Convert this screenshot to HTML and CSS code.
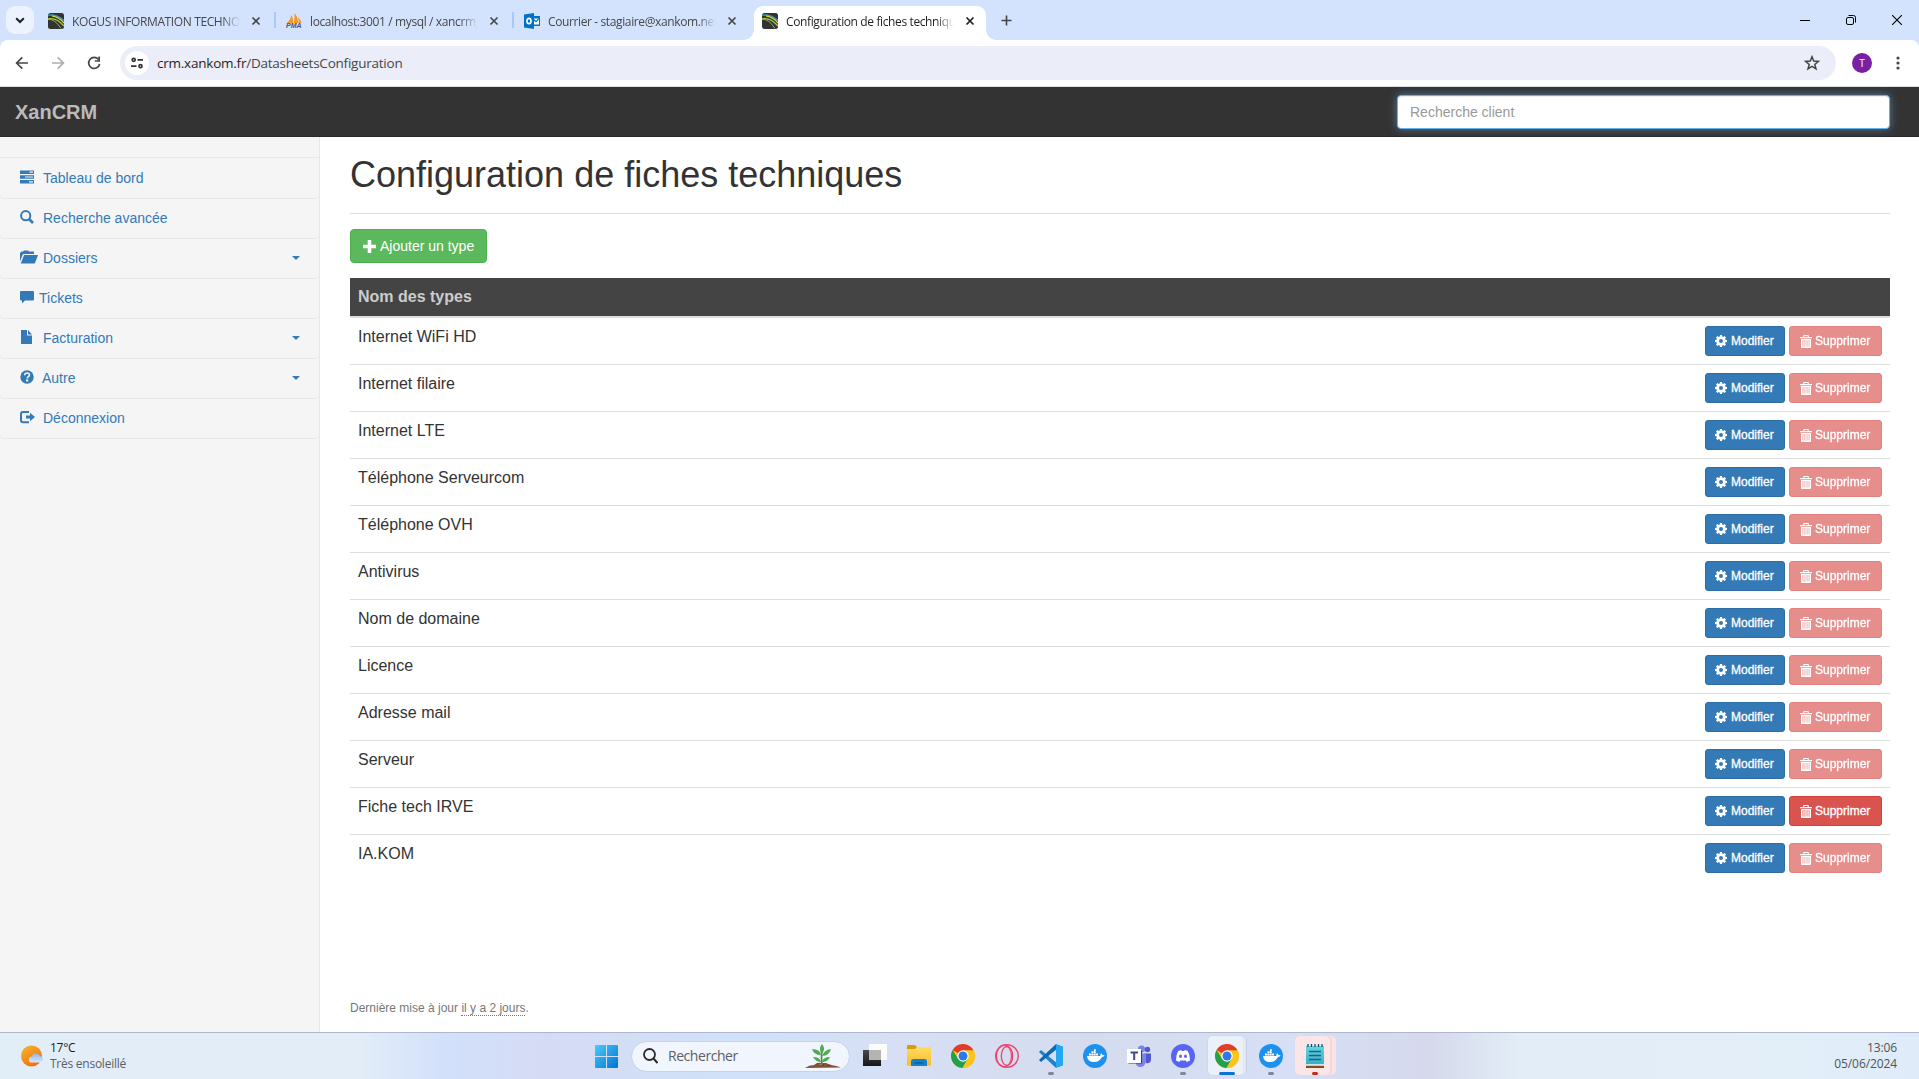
FILE: index.html
```html
<!DOCTYPE html>
<html lang="fr">
<head>
<meta charset="utf-8">
<title>Configuration de fiches techniques</title>
<link rel="stylesheet" href="styles.css">
</head>
<body>
<svg class="defs" aria-hidden="true">
  <defs>
    <linearGradient id="gWin" x1="0" y1="0" x2="1" y2="1"><stop offset="0" stop-color="#4ccbf8"/><stop offset="1" stop-color="#0073d0"/></linearGradient>
    <linearGradient id="gSun" x1="0" y1="0" x2="0.6" y2="1"><stop offset="0" stop-color="#f5b92e"/><stop offset="1" stop-color="#ee7013"/></linearGradient>
    <linearGradient id="gCloud" x1="0" y1="0" x2="0" y2="1"><stop offset="0" stop-color="#8fb4ee"/><stop offset="1" stop-color="#dbe8fc"/></linearGradient>
    <linearGradient id="gFolder" x1="0" y1="0" x2="0" y2="1"><stop offset="0" stop-color="#ffdc5e"/><stop offset="1" stop-color="#f6bb32"/></linearGradient>
    <linearGradient id="gDark" x1="0" y1="0" x2="0" y2="1"><stop offset="0" stop-color="#4b4b4b"/><stop offset="1" stop-color="#151515"/></linearGradient>
    <linearGradient id="gNote" x1="0" y1="0" x2="0" y2="1"><stop offset="0" stop-color="#66d2e4"/><stop offset="1" stop-color="#38aec8"/></linearGradient>
  </defs>
  <symbol id="close" viewBox="0 0 10 10"><path d="M1.5 1.5l7 7M8.500 1.500l-7 7" stroke="currentColor" stroke-width="1.700" fill="none"/></symbol>
  <symbol id="kogus" viewBox="0 0 16 16"><rect width="16" height="16" rx="2.500" fill="#333"/><path d="M0 2.200Q8 1 16 7.500" stroke="#3f9fb8" stroke-width="1.300" fill="none"/><path d="M0 6Q8 4 16 13" stroke="#a9cf38" stroke-width="1.300" fill="none"/><path d="M0 6.200Q7 6 13 15.500" stroke="#7fb95a" stroke-width="1" fill="none"/><path d="M4 3Q11 4 16 10" stroke="#e8e337" stroke-width="1.200" fill="none"/></symbol>
  <symbol id="gear" viewBox="0 0 12 12"><path fill="currentColor" fill-rule="evenodd" d="M5 0h2l.3 1.500.9.400L9.500 1 11 2.500l-.900 1.300.400.900L12 5v2l-1.500.300-.400.900.900 1.300L9.500 11l-1.300-.900-.900.400L7 12H5l-.300-1.500-.900-.400L2.500 11 1 9.500l.900-1.300-.400-.900L0 7V5l1.500-.300.400-.900L1 2.500 2.500 1l1.300.900.900-.400zM6 4a2 2 0 100 4 2 2 0 000-4z"/></symbol>
  <symbol id="trash" viewBox="0 0 12 13"><path fill="currentColor" fill-rule="evenodd" d="M0 2h3.200V.700Q3.200 0 4 0h4q.800 0 .800.700V2H12v1.200H0zM4.300 1v1h3.400V1zM1 4h10v8.200q0 .800-.800.800H1.800q-.800 0-.800-.800zm1.600 1v6.500h.700V5zm2 0v6.500h.700V5zm2.100 0v6.500h.7V5zm2 0v6.500h.7V5z"/></symbol>
  <symbol id="chrome" viewBox="0 0 24 24"><circle cx="12" cy="12" r="12" fill="#fcc419"/><path d="M12 12L1.600 6A12 12 0 0112 0a12 12 0 0110.400 6.500H12z" fill="#e13b2e"/><path d="M12 12l5 2.500L11.500 24A12 12 0 011.600 6l5.600 9z" fill="#22a04b"/><path d="M12 6.500h10.700A12 12 0 0111.500 24L16.700 15z" fill="#fcc419"/><circle cx="12" cy="12" r="5.700" fill="#fff"/><circle cx="12" cy="12" r="4.500" fill="#2e79ea"/></symbol>
  <symbol id="docker" viewBox="0 0 24 24"><circle cx="12" cy="12" r="12" fill="#1d91ee"/><path fill="#fff" d="M4 12h13.300q-.200-1.600.7-2.700 1.200.7 1.400 1.800 1.300-.1 2.300.400-.800 1.300-2.800 1.400Q16.700 18 11 18 4.500 18 4 12zM6 9.500h9v2H6zM8.500 7.300h4.300v1.800H8.500zM11 5.300h1.800v1.700H11z"/><path d="M8.300 9.500v2M10.500 7.500v4M12.700 9.500v2" stroke="#1d91ee" stroke-width=".4"/></symbol>
</svg>

<header class="browser">
  <div class="tabstrip">
    <span class="tabsearch"><svg width="10" height="7" viewBox="0 0 10 7"><path d="M1.200 1.200L5 5l3.800-3.800" fill="none" stroke="#1f1f1f" stroke-width="2"/></svg></span>
    <div class="tab"><svg class="fav"><use href="#kogus"/></svg><span class="tabname t1">KOGUS INFORMATION TECHNOLOGY</span><svg class="x"><use href="#close"/></svg></div>
    <div class="tab"><svg class="fav" viewBox="0 0 16 16"><path d="M1 10Q5 6 5.500 2q2 4 1.500 8zM7.500 10Q9 5 8.500 0q4 5 3.500 10zM12.500 10q.5-3-.5-6 3 3 3.500 6z" fill="#f8981d"/><text class="pma" x="0" y="15">PMA</text></svg><span class="tabname t2">localhost:3001 / mysql / xancrm_dev</span><svg class="x"><use href="#close"/></svg></div>
    <div class="tab"><svg class="fav" viewBox="0 0 16 16"><path d="M9 3h7v10H9z" fill="#0072c6"/><path d="M9.500 5.500h5.500v6H9.500z" fill="#fff"/><path d="M9.500 6.500l2.500 2.200 3.200-3.400" fill="none" stroke="#0072c6" stroke-width="1.200"/><path d="M0 1.500L10 0v16L0 14.500z" fill="#0072c6"/><ellipse cx="5" cy="8" rx="2" ry="2.700" fill="none" stroke="#fff" stroke-width="1.700"/></svg><span class="tabname t3">Courrier - stagiaire@xankom.net - Outlook</span><svg class="x"><use href="#close"/></svg></div>
    <div class="tab active"><svg class="fav"><use href="#kogus"/></svg><span class="tabname t4">Configuration de fiches techniques</span><svg class="x"><use href="#close"/></svg></div>
    <svg class="newtab" width="11" height="11"><path d="M5.500.500v10M.500 5.500h10" stroke="#444" stroke-width="1.600"/></svg>
    <div class="winctl">
      <svg width="10" height="10"><path d="M0 5.500h10" stroke="#000"/></svg>
      <svg width="10" height="10"><rect x=".5" y="2.500" width="7" height="7" rx="1.500" fill="none" stroke="#000"/><path d="M2.500.500H7.500q2 0 2 2v5" fill="none" stroke="#000"/></svg>
      <svg width="10" height="10"><path d="M0 0l10 10M10 0L0 10" stroke="#000" stroke-width="1.100"/></svg>
    </div>
  </div>
  <div class="toolbar">
    <svg class="nav" viewBox="0 0 14 14"><path d="M13 7H2M7.300 1.300L1.600 7l5.700 5.700" fill="none" stroke="#474747" stroke-width="1.700"/></svg>
    <svg class="nav" viewBox="0 0 14 14"><path d="M1 7h11M6.700 1.300L12.400 7l-5.700 5.700" fill="none" stroke="#aeaeae" stroke-width="1.700"/></svg>
    <svg class="nav" viewBox="0 0 14 14"><path d="M11.500 3.500A5.500 5.500 0 1012.600 8" fill="none" stroke="#474747" stroke-width="1.700"/><path d="M13 .500v5.300H7.800V4.200h3.500V.500z" fill="#474747"/></svg>
    <div class="omnibox">
      <span class="site"><svg width="12" height="12" viewBox="0 0 12 12" fill="none" stroke="#333" stroke-width="1.700"><circle cx="2.700" cy="2.800" r="1.500"/><path d="M6.500 2.800H12M0 9.200h5.500"/><circle cx="9.500" cy="9.200" r="1.500"/></svg></span>
      <span class="url">crm.xankom.fr<span>/DatasheetsConfiguration</span></span>
      <svg class="star" viewBox="0 0 16 16"><path d="M8 1.800l1.700 4.300 4.700.300-3.600 3 1.200 4.500L8 11.400l-4 2.500 1.200-4.500-3.600-3 4.700-.300z" fill="none" stroke="#444" stroke-width="1.500"/></svg>
    </div>
    <span class="avatar">T</span>
    <svg class="dots" width="4" height="14"><circle cx="2" cy="2" r="1.600"/><circle cx="2" cy="7" r="1.600"/><circle cx="2" cy="12" r="1.600"/></svg>
  </div>
</header>

<nav class="navbar"><a class="brand">XanCRM</a><input class="search" type="text" placeholder="Recherche client"></nav>

<div class="page">
  <aside class="sidebar">
    <ul>
      <li><svg viewBox="0 0 14 14"><path fill="currentColor" fill-rule="evenodd" d="M0 .500h14v3.500H0zM9.500 1.500v1.200H13V1.500zM0 5.300h14v3.500H0zM5 6.400v1.200h8V6.400zM0 10.100h14v3.500H0zM9 11.200v1.200h4v-1.200z"/></svg><span>Tableau de bord</span></li>
      <li><svg viewBox="0 0 14 14"><circle cx="5.700" cy="5.700" r="4.600" fill="none" stroke="currentColor" stroke-width="2"/><path d="M9 9l4 4" stroke="currentColor" stroke-width="2.600"/></svg><span>Recherche avancée</span></li>
      <li><svg viewBox="0 0 14 14"><path fill="currentColor" d="M0 3l1.500-1.500H3L4 .500h4l1 1h4.500q.500 0 .500.500v2H4Q3 4 2.500 5L0 11.500z"/><path fill="currentColor" d="M4 5h14l-3 8q-.2.600-1 .600H.800z"/></svg><span>Dossiers</span><i class="caret"></i></li>
      <li><svg viewBox="0 0 14 14"><path fill="currentColor" d="M1 1h12q1 0 1 1v7.500q0 1-1 1H5L2 13.500v-3H1q-1 0-1-1V2q0-1 1-1z"/></svg><span class="near">Tickets</span></li>
      <li><svg viewBox="0 0 14 14"><path fill="currentColor" d="M1 0h6v5.500h5V14H1zM8 0l4 4.500H8z"/></svg><span>Facturation</span><i class="caret"></i></li>
      <li><svg viewBox="0 0 14 14"><circle cx="7" cy="7" r="6.700" fill="currentColor"/><path d="M4.700 5.200Q4.800 3 7.100 3q2.300 0 2.300 2 0 1.100-1.200 1.800-.9.500-.9 1.600" fill="none" stroke="#f5f5f5" stroke-width="1.600"/><path d="M6 9.500h2.300v2H6z" fill="#f5f5f5"/></svg><span class="mid">Autre</span><i class="caret"></i></li>
      <li><svg viewBox="0 0 14 14"><path d="M9 1.900H3.200Q1 1.900 1 4v6q0 2.200 2.200 2.200H9" fill="none" stroke="currentColor" stroke-width="2"/><path fill="currentColor" d="M6 5.500h4V2.800L15 7l-5 4.200V8.600H6z"/></svg><span>Déconnexion</span></li>
    </ul>
  </aside>
  <main class="content">
    <h1>Configuration de fiches techniques</h1>
    <a class="btn add"><svg width="13" height="13" viewBox="0 0 13 13"><path d="M6.500 0v13M0 6.500h13" stroke="#fff" stroke-width="3.600"/></svg>Ajouter un type</a>
    <table class="types">
      <thead><tr><th>Nom des types</th><th></th></tr></thead>
      <tbody>
        <tr><td>Internet WiFi HD</td><td class="actions"><a class="btn edit"><svg><use href="#gear"/></svg>Modifier</a><a class="btn del off"><svg><use href="#trash"/></svg>Supprimer</a></td></tr>
        <tr><td>Internet filaire</td><td class="actions"><a class="btn edit"><svg><use href="#gear"/></svg>Modifier</a><a class="btn del off"><svg><use href="#trash"/></svg>Supprimer</a></td></tr>
        <tr><td>Internet LTE</td><td class="actions"><a class="btn edit"><svg><use href="#gear"/></svg>Modifier</a><a class="btn del off"><svg><use href="#trash"/></svg>Supprimer</a></td></tr>
        <tr><td>Téléphone Serveurcom</td><td class="actions"><a class="btn edit"><svg><use href="#gear"/></svg>Modifier</a><a class="btn del off"><svg><use href="#trash"/></svg>Supprimer</a></td></tr>
        <tr><td>Téléphone OVH</td><td class="actions"><a class="btn edit"><svg><use href="#gear"/></svg>Modifier</a><a class="btn del off"><svg><use href="#trash"/></svg>Supprimer</a></td></tr>
        <tr><td>Antivirus</td><td class="actions"><a class="btn edit"><svg><use href="#gear"/></svg>Modifier</a><a class="btn del off"><svg><use href="#trash"/></svg>Supprimer</a></td></tr>
        <tr><td>Nom de domaine</td><td class="actions"><a class="btn edit"><svg><use href="#gear"/></svg>Modifier</a><a class="btn del off"><svg><use href="#trash"/></svg>Supprimer</a></td></tr>
        <tr><td>Licence</td><td class="actions"><a class="btn edit"><svg><use href="#gear"/></svg>Modifier</a><a class="btn del off"><svg><use href="#trash"/></svg>Supprimer</a></td></tr>
        <tr><td>Adresse mail</td><td class="actions"><a class="btn edit"><svg><use href="#gear"/></svg>Modifier</a><a class="btn del off"><svg><use href="#trash"/></svg>Supprimer</a></td></tr>
        <tr><td>Serveur</td><td class="actions"><a class="btn edit"><svg><use href="#gear"/></svg>Modifier</a><a class="btn del off"><svg><use href="#trash"/></svg>Supprimer</a></td></tr>
        <tr><td>Fiche tech IRVE</td><td class="actions"><a class="btn edit"><svg><use href="#gear"/></svg>Modifier</a><a class="btn del"><svg><use href="#trash"/></svg>Supprimer</a></td></tr>
        <tr><td>IA.KOM</td><td class="actions"><a class="btn edit"><svg><use href="#gear"/></svg>Modifier</a><a class="btn del off"><svg><use href="#trash"/></svg>Supprimer</a></td></tr>
      </tbody>
    </table>
    <footer>Dernière mise à jour <abbr>il y a 2 jours</abbr>.</footer>
  </main>
</div>

<div class="taskbar">
  <div class="weather">
    <svg width="23" height="22" viewBox="0 0 23 22"><circle cx="10.500" cy="11" r="10.500" fill="url(#gSun)"/><path d="M11 17.500a3 3 0 01-.3-6 4.500 4.500 0 018.400-.4A3.300 3.300 0 0119.800 17.500z" fill="url(#gCloud)"/></svg>
    <div><b>17°C</b><span>Très ensoleillé</span></div>
  </div>
  <svg class="start" width="23" height="23"><path fill="url(#gWin)" d="M1 0h10v11H0V1q0-1 1-1zM12 0h10q1 0 1 1v10H12zM0 12h11v11H1q-1 0-1-1zM12 12h11v10q0 1-1 1H12z"/></svg>
  <div class="pill">
    <svg width="15" height="16" viewBox="0 0 15 16"><circle cx="6.500" cy="6.500" r="5.500" fill="none" stroke="#2b2b2b" stroke-width="1.800"/><path d="M10.500 10.500l4 4.500" stroke="#2b2b2b" stroke-width="2"/></svg>
    <span>Rechercher</span>
    <svg class="plant" width="36" height="25" viewBox="0 0 36 25"><path d="M0 24q4-3 9-3l3-2h9l5 2q6 .500 10 2.500z" fill="#80533a"/><path d="M12 20l3-1 4 2-3 1zM22 22l4-1" fill="#b07c55" stroke="#5d3622" stroke-width=".6"/><path d="M17 20Q16 10 17 4" stroke="#3f8f3d" stroke-width="1.600" fill="none"/><path d="M17 0q4 4 0 10-4-5 0-10zM17 12Q19 6 26 5q-2 7-9 7zM16 11Q9 11 7 5q8 0 9 6zM17 18q1-5 8-5-2 5-8 5zM16 18q-5 0-8-5 7 0 8 5z" fill="#4dab52"/></svg>
  </div>
  <div class="apps">
    <span><svg viewBox="0 0 24 24"><path d="M0 6h18v16H0z" fill="url(#gDark)"/><path d="M6 0h18v16H6z" fill="#fff" fill-opacity=".9"/><path d="M6 6h12v10H6z" fill="#b4b4b4"/></svg></span>
    <span><svg viewBox="0 0 24 24"><path d="M0 2q0-1 1-1h7l2 2v3H0z" fill="#d99a0b"/><path d="M0 5h8l2-2h13q1 0 1 1v17.500H0z" fill="url(#gFolder)"/><path d="M4 22v-4.500Q4 15 6.500 15h11q2.500 0 2.500 2.500V22z" fill="#1181cc"/><path d="M7.500 19h9" stroke="#0860a1" stroke-width="1.500"/></svg></span>
    <span><svg><use href="#chrome"/></svg></span>
    <span><svg viewBox="0 0 24 24" fill="none" stroke="#f0426c"><circle cx="12" cy="12" r="11.300" stroke-width="1.400"/><ellipse cx="9" cy="12" rx="7.500" ry="11" stroke-width="1.200"/><ellipse cx="12" cy="12" rx="5.700" ry="9.500" stroke-width="1.300"/></svg></span>
    <span class="run"><svg viewBox="0 0 24 24"><path d="M0 8l2-2 17 14-2 4z" fill="#1a83c9"/><path d="M0 16l2 2L19 4l-2-4z" fill="#0b69ad"/><path d="M17 0l7 2.500v19L17 24z" fill="#26a7f1"/></svg></span>
    <span><svg><use href="#docker"/></svg></span>
    <span><svg viewBox="0 0 24 24"><circle cx="14.500" cy="5" r="3.600" fill="#7b83eb"/><circle cx="20.500" cy="5.500" r="2.700" fill="#5059c9"/><path d="M17 9.500h7V16q-1 4-5 3z" fill="#5059c9"/><path d="M9 9.500h10V17q-1 6-6 6-3 0-4-3z" fill="#7b83eb"/><path d="M1.500 6.500H15v13H1.500z" fill="#34377d"/><path d="M0 5h14v14H0z" fill="#fff"/><path d="M3.500 8.500h7.500M7.200 8.500V16" stroke="#444791" stroke-width="2"/></svg></span>
    <span class="run"><svg viewBox="0 0 24 24"><circle cx="12" cy="12" r="12" fill="#5865f2"/><path fill="#fff" fill-rule="evenodd" d="M5 16.500q0-6 2.200-9.500l3-.9.600 1h2.400l.6-1 3 .9q2.200 3.500 2.200 9.500l-3.200 1.500-.9-1.500H9.100l-.9 1.500zM9.500 10.500a1.500 1.800 0 100 3.600 1.500 1.800 0 000-3.600zm5 0a1.500 1.800 0 100 3.600 1.500 1.800 0 000-3.600z"/></svg></span>
    <span class="run current"><svg><use href="#chrome"/></svg></span>
    <span class="run"><svg><use href="#docker"/></svg></span>
    <span class="run alert"><svg viewBox="0 0 24 24"><path d="M3 21h18v3H3z" fill="#8c4a14"/><path d="M3 2h18v18.500H3z" fill="url(#gNote)"/><path d="M3 20.500h18v1.200H3z" fill="#fff"/><path d="M6 7.500h12M6 11.500h12M6 15.500h12" stroke="#14677e" stroke-width="1.500"/><path d="M5 0v3M8.500 0v3M12 0v3M15.500 0v3M19 0v3" stroke="#174f5e" stroke-width="1.300"/></svg></span>
  </div>
  <div class="clock"><span>13:06</span><span>05/06/2024</span></div>
</div>
</body>
</html>
```
FILE: styles.css
```css
* { box-sizing: border-box; }
body { margin: 0; width: 1919px; height: 1079px; overflow: hidden; display: flex; flex-direction: column; background: #fff; color: #333; font: 14px/20px "Liberation Sans", Arial, sans-serif; }
svg { display: block; flex: none; }
.defs { position: absolute; width: 0; height: 0; }

/* Browser chrome */
.browser { height: 87px; background: #d3e3fd; border-bottom: 1px solid #dcdee3; font-family: "Open Sans", "Noto Sans", sans-serif; flex: none; }
.tabstrip { height: 40px; display: flex; align-items: flex-start; padding: 6px 17px 0 6px; }
.tabsearch { width: 28px; height: 28px; border-radius: 9px; background: #ecf3fe; display: flex; align-items: center; justify-content: center; margin-right: 6px; }
.tab { position: relative; width: 232px; height: 34px; margin-right: 6px; padding: 0 11px 5px 8px; display: flex; align-items: center; color: #474747; }
.tab::after { content: ""; position: absolute; right: -4px; top: 6px; width: 2px; height: 16px; background: #a8c7fa; }
.tab:nth-child(4)::after, .tab.active::after { display: none; }
.tab.active { background: #fff; border-radius: 9px 9px 0 0; color: #1f1f1f; }
.tab.active::before { content: ""; position: absolute; bottom: 0; left: -10px; right: -10px; height: 10px; background: radial-gradient(circle at 0 0, transparent 9.500px, #fff 10px) left / 10px 10px no-repeat, radial-gradient(circle at 100% 0, transparent 9.500px, #fff 10px) right / 10px 10px no-repeat; }
.fav { width: 16px; height: 16px; margin-right: 8px; }
.pma { font: italic bold 7px "Liberation Sans", Arial, sans-serif; fill: #4d4f86; }
.tabname { width: 168px; overflow: hidden; white-space: nowrap; font-size: 12px; letter-spacing: -.38px; line-height: 20px; position: relative; top: 1px; -webkit-mask-image: linear-gradient(90deg, #000 150px, transparent 168px); mask-image: linear-gradient(90deg, #000 150px, transparent 168px); }
.x { width: 10px; height: 10px; margin-left: auto; }
.newtab { margin: 9px 0 0 9px; }
.winctl { margin: 9px 0 0 auto; display: flex; gap: 36px; }
.toolbar { height: 46px; background: #fff; border-radius: 8px 8px 0 0; display: flex; align-items: center; padding-left: 15px; }
.nav { width: 14px; height: 14px; margin-right: 22px; }
.omnibox { width: 1716px; height: 34px; margin-left: -3px; border-radius: 17px; background: #ebeef8; display: flex; align-items: center; padding: 0 16px 0 5px; }
.site { width: 24px; height: 24px; border-radius: 50%; background: #fff; display: flex; align-items: center; justify-content: center; margin-right: 8px; }
.url { font-size: 13.500px; letter-spacing: -.23px; color: #1f1f1f; }
.url span { color: #474747; }
.star { width: 16px; height: 16px; margin-left: auto; }
.avatar { width: 20px; height: 20px; margin-left: 16px; border-radius: 50%; background: #7b1fa2; color: #fff; font-size: 10px; text-align: center; line-height: 20px; }
.dots { margin-left: 24px; fill: #474747; }

/* Top bar */
.navbar { height: 50px; flex: none; background: #333; border-bottom: 1px solid #292929; display: flex; align-items: center; justify-content: space-between; padding: 0 29px 0 15px; }
.brand { font-size: 20px; font-weight: bold; color: #bbb; }
.search { width: 493px; height: 34px; border: 1px solid #66afe9; border-radius: 4px; padding: 6px 12px; font: 14px "Liberation Sans", Arial, sans-serif; outline: 0; box-shadow: inset 0 1px 1px rgba(0,0,0,.075), 0 0 8px rgba(102,175,233,.6); }
.search::placeholder { color: #999; }

/* Page */
.page { flex: 1; min-height: 0; display: flex; }
.sidebar { width: 320px; background: #f5f5f5; border-right: 1px solid #e7e7e7; padding-top: 20px; color: #337ab7; }
.sidebar ul { margin: 0; padding: 0; list-style: none; border-top: 1px solid #e7e7e7; }
.sidebar li { position: relative; height: 40px; padding: 0 19px 0 20px; display: flex; align-items: center; border-radius: 0 0 4px 4px; box-shadow: 0 1px 0 #e7e7e7; }
.sidebar svg { width: 14px; height: 14px; overflow: visible; margin: 0 9px 3px 0; }
.sidebar .near { margin-left: -4px; }
.sidebar .mid { margin-left: -1px; }
.caret { margin-left: auto; border: 4px solid transparent; border-top-color: #337ab7; border-bottom: 0; }
.content { flex: 1; padding: 0 29px 13px 30px; display: flex; flex-direction: column; align-items: flex-start; }
h1 { width: 100%; margin: 0 0 15px; height: 77px; padding-top: 18px; border-bottom: 1px solid #ddd; font-size: 36px; font-weight: normal; line-height: 40px; }
.btn { display: inline-flex; align-items: center; color: #fff; border: 1px solid; border-radius: 3px; white-space: nowrap; }
.add { height: 34px; width: 137px; padding: 0 12px; gap: 4px; background: #5cb85c; border-color: #4cae4c; border-radius: 4px; margin-bottom: 15px; }
.types { width: 100%; border-collapse: separate; border-spacing: 0; font-size: 16px; line-height: 22px; }
.types th { height: 40px; padding: 8px; background: #444; color: #ccc; text-align: left; vertical-align: top; border-bottom: 2px solid #ddd; }
.types td { height: 47px; padding: 8px; vertical-align: top; border-bottom: 1px solid #ddd; }
.types tr:last-child td { border-bottom: 0; }
.types .actions { text-align: right; font-size: 0; line-height: 0; }
.actions .btn { height: 30px; padding: 0 9px; font-size: 12px; line-height: 18px; vertical-align: top; -webkit-text-stroke: .3px #fff; }
.actions svg { width: 12px; height: 12px; margin-right: 4px; }
.edit { width: 80px; background: #337ab7; border-color: #2e6da4; }
.del { width: 93px; margin-left: 4px; background: #d9534f; border-color: #d43f3a; }
.actions .del { padding-left: 10px; }
.actions .del svg { height: 13px; margin-right: 3px; }
.off { opacity: .65; }
footer { margin-top: auto; font-size: 12px; line-height: 22px; color: #777; }
abbr { border-bottom: 1px dotted #777; }

/* Taskbar */
.taskbar { height: 47px; flex: none; border-top: 1px solid #aeb8c8; display: flex; align-items: center; font: 12px/16px "Open Sans", "Noto Sans", sans-serif; background: linear-gradient(90deg, #e2eef7 0, #e2edf8 360px, #d2e0fb 445px, #d6dbf5 545px, #d3def5 620px, #cfe2f9 755px, #d7dff5 900px, #d5dcee 1090px, #d6dff6 1290px, #d6d9ec 1430px, #e2edf7 1520px, #e2eef8 1800px, #dfebf8 100%); }
.weather { width: 595px; padding-left: 21px; display: flex; align-items: center; gap: 6px; color: #5c6066; letter-spacing: -.25px; }
.weather b, .weather span, .clock span { display: block; }
.weather b { font-weight: normal; color: #1b1b1b; }
.pill { width: 219px; height: 31px; margin: 0 3px 0 13px; padding: 0 8px 0 11px; border-radius: 16px; background: #f1f5fd; border: 1px solid #c8d2e6; display: flex; align-items: center; font-size: 14px; color: #5c6066; }
.pill span { margin-left: 10px; letter-spacing: -.45px; }
.plant { margin-left: auto; }
.apps { display: flex; }
.apps span { position: relative; width: 44px; height: 40px; display: flex; align-items: center; justify-content: center; }
.apps svg { position: relative; width: 24px; height: 24px; }
.run::after { content: ""; position: absolute; bottom: 1px; left: 19px; width: 6px; height: 3px; border-radius: 2px; background: #7f8794; }
.run.current::after { left: 14px; width: 16px; background: #0a75d1; }
.run.alert::after { background: #c42b1c; }
.run.current::before, .run.alert::before { content: ""; position: absolute; left: 3px; top: 0; width: 35px; height: 39px; border-radius: 5px; background: #ebf0fb; box-shadow: 3px 0 0 #e1e8f7, 4px 0 0 #c6d0e4, 0 0 0 1px #d0d9ea; }
.run.alert::before { left: 2px; background: #fce5e6; box-shadow: 2px 0 0 #eed7df, 6px 0 0 #fbe2e6; }
.clock { margin-left: auto; padding-right: 22px; text-align: right; color: #505459; letter-spacing: -.1px; }
```
